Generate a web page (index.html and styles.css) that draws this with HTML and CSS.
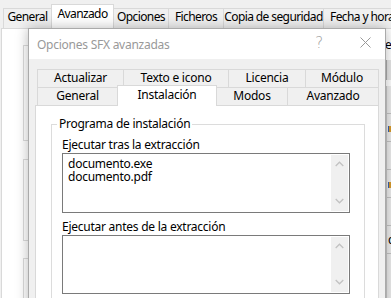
FILE: index.html
```html
<!DOCTYPE html>
<html lang="es">
<head>
  <meta charset="UTF-8">
  <meta name="viewport" content="width=device-width, initial-scale=1.0">
  <title>Opciones SFX avanzadas</title>
  <link rel="stylesheet" href="styles.css">
</head>
<body>
  <!-- Ventana principal (detrás del diálogo) -->
  <div class="main-tabs">
    <div class="main-tab">General</div>
    <div class="main-tab active">Avanzado</div>
    <div class="main-tab">Opciones</div>
    <div class="main-tab">Ficheros</div>
    <div class="main-tab">Copia de seguridad</div>
    <div class="main-tab">Fecha y hora</div>
  </div>
  <div class="main-panel">
    <div class="bg-groups">
      <div class="bg-group g1"></div>
      <div class="bg-group g2"></div>
      <div class="bg-group g3"></div>
    </div>
    <div class="bg-right">
      <div class="bg-caption">e</div>
      <div class="bg-spin"></div>
      <div class="bg-list">
        <div class="bg-row"></div>
        <div class="bg-row"><span class="bg-icon"></span></div>
        <div class="bg-row"></div>
        <div class="bg-row"><span class="bg-icon"></span></div>
        <div class="bg-row"></div>
        <div class="bg-row">c</div>
      </div>
    </div>
  </div>

  <!-- Diálogo -->
  <div class="dialog">
    <div class="dialog-title">
      <span class="dialog-caption">Opciones SFX avanzadas</span>
      <span class="dialog-help">?</span>
      <span class="dialog-close">
        <svg width="11" height="11" viewBox="0 0 11 11">
          <path d="M0.5 0.5 L10.5 10.5 M10.5 0.5 L0.5 10.5" stroke="#999" stroke-width="1" fill="none"/>
        </svg>
      </span>
    </div>
    <div class="dialog-body">
      <div class="tabs">
        <div class="tab-row">
          <div class="tab">Actualizar</div>
          <div class="tab">Texto e icono</div>
          <div class="tab">Licencia</div>
          <div class="tab">Módulo</div>
        </div>
        <div class="tab-row">
          <div class="tab">General</div>
          <div class="tab active">Instalación</div>
          <div class="tab">Modos</div>
          <div class="tab">Avanzado</div>
        </div>
      </div>
      <div class="tab-page">
        <fieldset class="group">
          <legend>Programa de instalación</legend>
          <label class="field-label">Ejecutar tras la extracción</label>
          <div class="textbox">
            <div class="textbox-text">documento.exe<br>documento.pdf</div>
            <div class="scrollbar">
              <svg width="9" height="6" viewBox="0 0 9 6"><polyline points="0.7,5 4.5,1.2 8.3,5" stroke="#c2c2c2" stroke-width="1.3" fill="none"/></svg>
              <svg width="9" height="6" viewBox="0 0 9 6"><polyline points="0.7,1 4.5,4.8 8.3,1" stroke="#c2c2c2" stroke-width="1.3" fill="none"/></svg>
            </div>
          </div>
          <label class="field-label second">Ejecutar antes de la extracción</label>
          <div class="textbox short">
            <div class="textbox-text"></div>
            <div class="scrollbar">
              <svg width="9" height="6" viewBox="0 0 9 6"><polyline points="0.7,5 4.5,1.2 8.3,5" stroke="#c2c2c2" stroke-width="1.3" fill="none"/></svg>
              <svg width="9" height="6" viewBox="0 0 9 6"><polyline points="0.7,1 4.5,4.8 8.3,1" stroke="#c2c2c2" stroke-width="1.3" fill="none"/></svg>
            </div>
          </div>
        </fieldset>
      </div>
    </div>
  </div>
</body>
</html>
```

FILE: styles.css
```css
body {
  margin: 0;
  width: 391px;
  height: 298px;
  overflow: hidden;
  position: relative;
  background-color: #f0f0f0;
  font-family: "Noto Sans", sans-serif;
  font-size: 12px;
  letter-spacing: -0.25px;
  color: #000;
}

/* ventana principal */
.main-tabs {
  display: flex;
  align-items: flex-end;
  height: 28px;
  padding-left: 3px;
}

.main-tab {
  flex-shrink: 0;
  box-sizing: border-box;
  height: 20px;
  line-height: 16px;
  border: 1px solid #d9d9d9;
  border-bottom: none;
  margin-right: -1px;
  background-color: #f0f0f0;
  text-align: center;
  white-space: nowrap;
  letter-spacing: -0.6px;
}

.main-tab:nth-child(1) { width: 49px; }
.main-tab:nth-child(2) { width: 63px; }
.main-tab:nth-child(3) { width: 56px; }
.main-tab:nth-child(4) { width: 56px; }
.main-tab:nth-child(5) { width: 101px; }
.main-tab:nth-child(6) { width: 90px; text-align: left; padding-left: 6px; }

.main-tab.active {
  height: 25px;
  line-height: 18px;
  margin-bottom: -1px;
  background-color: #fff;
  position: relative;
  z-index: 1;
}

.main-panel {
  display: flex;
  height: 270px;
  margin-left: 1px;
  background-color: #fff;
  border-top: 1px solid #d9d9d9;
  border-left: 1px solid #d9d9d9;
}

.bg-groups {
  flex: 1;
  padding: 16px 0 0 21px;
}

.bg-group {
  box-sizing: border-box;
  border: 1px solid #dcdcdc;
}

.g1 { height: 96px; }
.g2 { height: 82px; margin-top: 18px; }
.g3 { height: 80px; margin-top: 17px; }

.bg-right {
  width: 12px;
  overflow: hidden;
}

.bg-caption {
  margin: 8px 0 0 6px;
  line-height: 16px;
  white-space: nowrap;
}

.bg-spin {
  height: 20px;
  margin: 7px 0 0 7px;
  background-color: #e6e6e6;
  border-left: 1px solid #adadad;
}

.bg-list {
  margin: 6px 0 0 7px;
  height: 220px;
  background-color: #ececec;
  border-left: 1px solid #c8c8c8;
}

.bg-row {
  height: 27px;
  line-height: 27px;
  border-bottom: 1px solid #c4c4c4;
  padding-left: 1px;
}

.bg-icon {
  display: inline-block;
  width: 4px;
  height: 6px;
  background-color: #d79a2b;
  border-left: 1px solid #3a62b0;
  vertical-align: middle;
}

/* diálogo */
.dialog {
  position: absolute;
  left: 28px;
  top: 28px;
  width: 358px;
  height: 290px;
  box-sizing: border-box;
  border: 1px solid #aaaaaa;
  background-color: #f0f0f0;
  box-shadow: 0 0 12px rgba(0, 0, 0, 0.28);
  z-index: 2;
}

.dialog-title {
  display: flex;
  align-items: center;
  height: 30px;
  background-color: #fff;
}

.dialog-caption {
  flex: 1;
  padding-left: 8px;
  color: #999;
}

.dialog-help {
  width: 46px;
  margin: 0 3px 3px 0;
  text-align: center;
  line-height: 16px;
  color: #a0a0a0;
  font-family: "DejaVu Sans", sans-serif;
  font-weight: 200;
  font-size: 15px;
}

.dialog-close {
  width: 40px;
  display: flex;
  justify-content: center;
  margin-bottom: 3px;
}

.dialog-body {
  padding: 10px 6px 0;
}

.tabs {
  padding-left: 2px;
}

.tab-row {
  display: flex;
  align-items: flex-end;
  height: 18px;
}

.tab {
  flex-shrink: 0;
  box-sizing: border-box;
  height: 18px;
  line-height: 16px;
  border: 1px solid #d9d9d9;
  border-bottom: none;
  margin-right: -1px;
  background-color: #f0f0f0;
  text-align: center;
  white-space: nowrap;
}

.tab-row:first-child .tab:nth-child(1) { width: 87px; }
.tab-row:first-child .tab:nth-child(2) { width: 106px; }
.tab-row:first-child .tab:nth-child(3) { width: 78px; }
.tab-row:first-child .tab:nth-child(4) { width: 74px; }
.tab-row:last-child .tab:nth-child(1) { width: 81px; }
.tab-row:last-child .tab:nth-child(2) { width: 100px; }
.tab-row:last-child .tab:nth-child(3) { width: 72px; }
.tab-row:last-child .tab:nth-child(4) { width: 92px; }

.tab.active {
  height: 21px;
  padding-top: 1px;
  margin-bottom: -1px;
  background-color: #fff;
  position: relative;
  z-index: 1;
}

.tab-page {
  height: 200px;
  padding: 10px 13px 0 15px;
  background-color: #fff;
  border: 1px solid #d9d9d9;
}

.group {
  margin: 0;
  padding: 0 9px 10px 10px;
  border: 1px solid #dcdcdc;
}

.group legend {
  margin-left: -5px;
  padding: 0 2px;
  line-height: 16px;
}

.field-label {
  display: block;
  margin-top: 5px;
  line-height: 16px;
}

.field-label.second {
  margin-top: 6px;
}

.textbox {
  display: flex;
  box-sizing: border-box;
  width: 288px;
  height: 60px;
  border: 1px solid #7a7a7a;
  background-color: #fff;
}

.textbox.short {
  height: 59px;
}

.textbox-text {
  flex: 1;
  padding: 3px 5px;
  line-height: 13px;
}

.scrollbar {
  display: flex;
  flex-direction: column;
  justify-content: space-between;
  align-items: center;
  width: 17px;
  margin: 1px;
  padding: 6px 0 7px;
  box-sizing: border-box;
  background-color: #f0f0f0;
}
```
